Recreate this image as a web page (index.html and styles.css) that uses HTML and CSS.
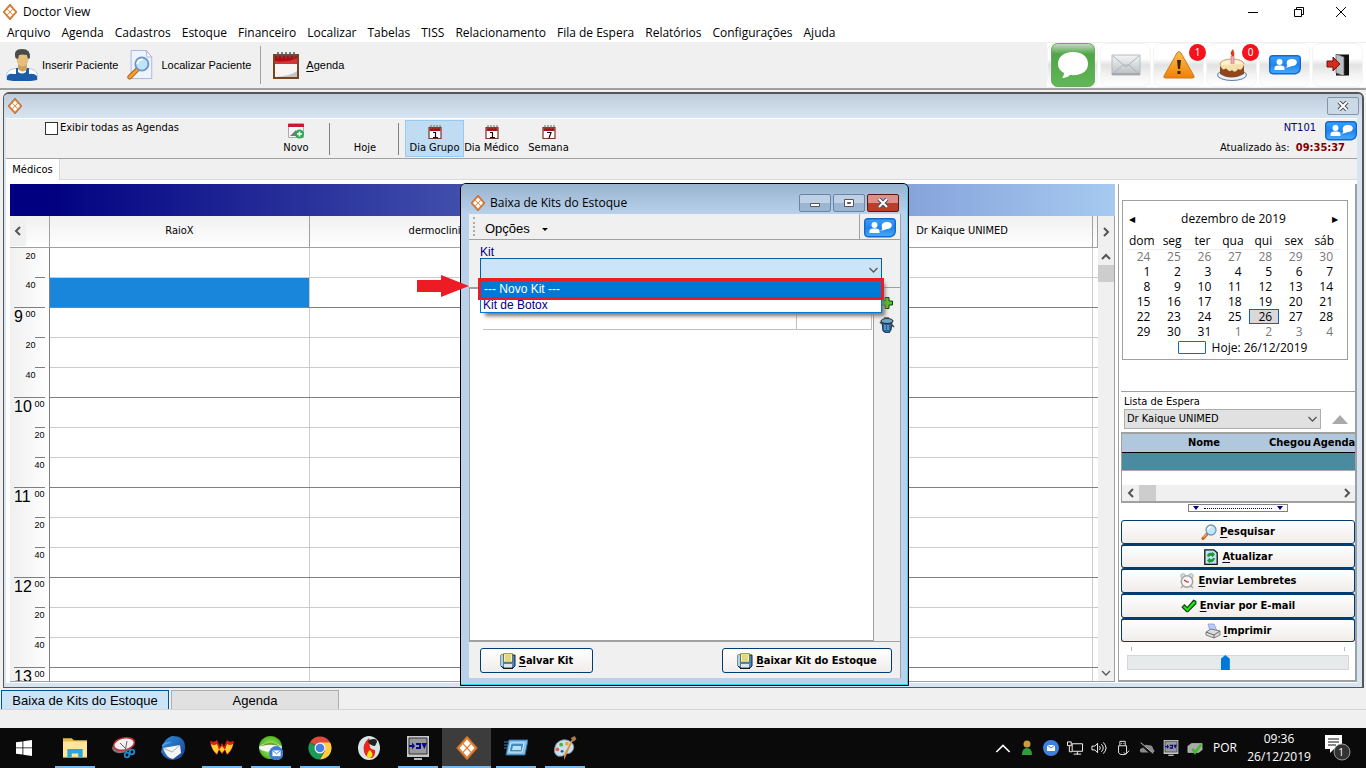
FILE: index.html
```html
<!DOCTYPE html>
<html lang="pt-BR">
<head>
<meta charset="utf-8">
<title>Doctor View</title>
<link rel="stylesheet" href="styles.css">
</head>
<body>
<svg class="sprite" aria-hidden="true">
  <defs>
    <linearGradient id="g-green" x2="0" y2="1"><stop offset="0" stop-color="#c4dfc2"/><stop offset=".25" stop-color="#4fa447"/><stop offset="1" stop-color="#62b757"/></linearGradient>
    <linearGradient id="g-blue" x2="0" y2="1"><stop offset="0" stop-color="#37a3ff"/><stop offset=".5" stop-color="#2084ee"/><stop offset="1" stop-color="#47abff"/></linearGradient>
    <linearGradient id="g-grey" x2="0" y2="1"><stop offset="0" stop-color="#f4f5f6"/><stop offset="1" stop-color="#b9bec2"/></linearGradient>
    <linearGradient id="g-orange" x2="0" y2="1"><stop offset="0" stop-color="#ffc04a"/><stop offset="1" stop-color="#f08008"/></linearGradient>
    <linearGradient id="g-bird" x2="1" y2="1"><stop offset="0" stop-color="#2f8fe0"/><stop offset="1" stop-color="#17408f"/></linearGradient>
    <radialGradient id="g-ball"><stop offset="0" stop-color="#c8f58a"/><stop offset="1" stop-color="#4db51c"/></radialGradient>
    <symbol id="i-logo" viewBox="0 0 14 16"><path d="M7 0 14 8 7 16 0 8Z" fill="#e08030" stroke="#a85a28" stroke-width=".6"/><path d="M7 2.400 9.300 5 7 7.400 4.700 5ZM4.200 5.500 6.400 8 4.200 10.500 2 8ZM9.800 5.500 12 8 9.800 10.500 7.600 8ZM7 8.600 9.300 11 7 13.600 4.700 11Z" fill="#fff"/></symbol>
    <symbol id="i-person" viewBox="0 0 32 32"><path d="M0 30Q0 21 7 20L12 19h8l5 1q7 1 7 10-16 5-32 0" fill="#fff" stroke="#8fb5dd" stroke-width=".7"/><path d="M1 27q2-3 6-2l3 0V19l2 0v4q4 3 8 0v-4l3 0v6q5-1 8 2v4q-15 3-30 0z" fill="#1c5da9"/><path d="M12 14h9v6q-4 5-9 0z" fill="#d2a05d"/><ellipse cx="16.500" cy="9.500" rx="6" ry="8" fill="#e5bd7c"/><path d="M9.500 9Q7 0 16 0t8 9l-2 1-1-4q-5-1-8 0l-1 4z" fill="#4a4a4a"/></symbol>
    <symbol id="i-find" viewBox="0 0 26 32"><path d="M3.500.5h16l6 7v23h-22z" fill="#edf4fd" stroke="#a6b2dc"/><path d="m19.500.5 1 7h5z" fill="#fff" stroke="#a6b2dc"/><path d="m10 21-8 8" stroke="#a65b16" stroke-width="5" stroke-linecap="round"/><path d="m10 21-8 8" stroke="#f5a02b" stroke-width="3" stroke-linecap="round"/><circle cx="15" cy="15" r="7" fill="#bfe3fa" stroke="#6f96c6" stroke-width="2"/><path d="M10 15q1-5 6-5" fill="none" stroke="#fff" stroke-width="2"/></symbol>
    <symbol id="i-mag" viewBox="0 0 16 16"><path d="m6 10-4 4.500" stroke="#b8601c" stroke-width="3" stroke-linecap="round"/><path d="m5.500 10-3 3.500" stroke="#f3a55e" stroke-width="1.500"/><circle cx="10" cy="6" r="5" fill="#bfe8fb" stroke="#7892ba" stroke-width="1.300"/><path d="M7 6q0-3 3-3" fill="none" stroke="#fff" stroke-width="1.500"/></symbol>
    <symbol id="i-cal" viewBox="0 0 26 28"><rect x="1" y="4" width="24" height="23" fill="#f7f6f4" stroke="#764523" stroke-width="2"/><path d="M2 5h22v8H2z" fill="#b60a10"/><path d="M2 10q12 2 22-3v6H2z" fill="#d0373a"/><path d="M2 26q16-1 22-6v6z" fill="#c4c4c4"/><path d="M5 7V1M9 7V1M13 7V1M17 7V1M21 7V1" stroke="#555" stroke-width="1.500"/></symbol>
    <symbol id="i-day1" viewBox="0 0 14 14"><path d="M1 2.500h12v11H1z" fill="#fff" stroke="#713820" stroke-width="1.200"/><path d="M1.500 3h11v3h-11z" fill="#b20e13"/><path d="M3 0v4M6 0v4M9 0v4M12 0v4" stroke="#666"/><path d="M5 7.500h2.500V12M5 12.500h5" stroke="#111" fill="none" stroke-width="1.200"/></symbol>
    <symbol id="i-day7" viewBox="0 0 14 14"><path d="M1 2.500h12v11H1z" fill="#fff" stroke="#713820" stroke-width="1.200"/><path d="M1.500 3h11v3h-11z" fill="#b20e13"/><path d="M3 0v4M6 0v4M9 0v4M12 0v4" stroke="#666"/><path d="M5 7.500h4L7 13" stroke="#111" fill="none" stroke-width="1.200"/></symbol>
    <symbol id="i-new" viewBox="0 0 16 16"><path d="M.5.5h15v14H.5z" fill="#f6f6f6" stroke="#aaa"/><path d="M0 1h16v3H0z" fill="#c91830"/><path d="m2 13 6-6v6z" fill="#777"/><circle cx="11.500" cy="11" r="4.500" fill="#2daa55"/><path d="M9 11h5M11.500 8.500v5" stroke="#fff" stroke-width="1.500"/></symbol>
    <symbol id="i-chat" viewBox="0 0 44 44"><rect x=".5" y=".5" width="43" height="43" rx="6" fill="url(#g-green)" stroke="#69a763"/><path d="M22 9C12 9 7 14 7 21c0 4 2 7 6 9q0 3-2 5 5 0 8-3c12 1 18-4 18-11S32 9 22 9" fill="#fff"/></symbol>
    <symbol id="i-mail" viewBox="0 0 30 22"><path d="M1 1h28v20H1z" fill="url(#g-grey)" stroke="#b6babd"/><path d="m2 20 10-9h6l10 9M2 2l13 11L28 2" fill="none" stroke="#aeb3b7"/><path d="M1 20h28" stroke="#8d9398"/></symbol>
    <symbol id="i-warn" viewBox="0 0 32 28"><path d="M14 2q2-3 4 0l13 23q1 2-2 2H3q-3 0-2-2z" fill="url(#g-orange)" stroke="#c97a20"/><path d="M14 9h4l-1 9h-2zM14.500 20h3v3h-3z" fill="#3b2506"/></symbol>
    <symbol id="i-cake" viewBox="0 0 30 32"><ellipse cx="15" cy="26" rx="14.500" ry="5.500" fill="#e9f1fa" stroke="#5b7eac"/><path d="M3 15v10q11 7 24 0V15z" fill="#8e481c"/><ellipse cx="15" cy="15" rx="12" ry="5" fill="#fbf2d5" stroke="#cf9d55"/><path d="M3 16q3 7 6 3 3 5 6 2 3 4 6-1 4 3 6-5" fill="#f5dfac"/><path d="M14 15V7h3v8" fill="#f1a8b4" stroke="#c76d78" stroke-width=".6"/><path d="M15 7q-3-3 1-7 2 4 1 7z" fill="#df3c16"/></symbol>
    <symbol id="i-users" viewBox="0 0 32 20"><path d="M4 .7h24q3.300 0 3.300 3v9q0 5-5 6H4Q.7 18.700.7 15V4Q.7.7 4 .7" fill="url(#g-blue)" stroke="#1467cc" stroke-width="1.400"/><circle cx="10.500" cy="7" r="3" fill="#fff"/><path d="M5.500 15v-2q0-3 5-2.500 5-.5 5 2.500v2z" fill="#fff"/><path d="M16 12q3 0 2-2c-1-4 1-6 5-6 7 0 6 7 0 7-3 1-5 2-7 1" fill="#fff"/></symbol>
    <symbol id="i-exit" viewBox="0 0 24 22"><path d="M10 .5h13v21H10z" fill="#111"/><path d="m10 0 8 3v19l-8-3z" fill="#bbc0c5" stroke="#555" stroke-width=".7"/><path d="M1 7h6V3l7 7-7 7v-4H1z" fill="#d52b1d" stroke="#6d140e"/></symbol>
    <symbol id="i-refresh" viewBox="0 0 14 16"><path d="M.8.8h9l3.400 3v11.500H.8z" fill="#bfe0f1" stroke="#111" stroke-width="1.300"/><path d="M3 7q1-4 5-3V2.500l3 3-3 3V7Q6 6 5 8zM11 9q-1 5-5 4v1.500l-3-3 3-3V10q2 1 3-1z" fill="#1b9b2d"/></symbol>
    <symbol id="i-clock" viewBox="0 0 14 16"><circle cx="3" cy="3" r="2.300" fill="#ddd" stroke="#999" stroke-width=".7"/><circle cx="11" cy="3" r="2.300" fill="#ddd" stroke="#999" stroke-width=".7"/><path d="m3 13-2 2M11 13l2 2" stroke="#aaa" stroke-width="1.500"/><circle cx="7" cy="8.500" r="5.700" fill="#f6f6f6" stroke="#a3a3a3" stroke-width="1.500"/><path d="m4 7 3 2h2" stroke="#bd2828" fill="none" stroke-width="1.200"/></symbol>
    <symbol id="i-check" viewBox="0 0 14 14"><path d="m1 8 2-2 2.500 2.500L11 2l2 1v2L6 12H5z" fill="#18e80e" stroke="#173f16"/></symbol>
    <symbol id="i-print" viewBox="0 0 16 16"><path d="M3 1h6l3 7H5z" fill="#bbcaff" stroke="#7f8fd3" stroke-width=".7"/><path d="m1 9 5-3 9 2v4l-6 3-8-3z" fill="#ddd" stroke="#666" stroke-width=".8"/><path d="m1 9 8 3 6-4M9 12v3" fill="none" stroke="#666"/></symbol>
    <symbol id="i-save" viewBox="0 0 16 16"><path d="M1 2h14v11l-2 2H3l-2-2z" fill="#3f86d2" stroke="#172434"/><path d="M1 2h2v11H1z" fill="#a9d3f0"/><path d="M3.500.7h9v8.500h-9z" fill="#faf3a4" stroke="#5a5620" stroke-width=".7"/><path d="M5 3h6M5 5h6M5 7h6" stroke="#b5a54b" stroke-width=".7"/><path d="M4 11h8v4H4z" fill="#dfe4e8"/><path d="M3 15.300h10" stroke="#111" stroke-width="1.300"/></symbol>
    <symbol id="i-plus" viewBox="0 0 12 12"><path d="M4 .5h4V4h3.500v4H8v3.500H4V8H.5V4H4z" fill="#55c51b" stroke="#173e12"/></symbol>
    <symbol id="i-trash" viewBox="0 0 16 16"><path d="m3 5 1 9 3 2h3l2-3 1-8z" fill="#28679d" stroke="#17324e"/><ellipse cx="8" cy="4" rx="6" ry="2.500" fill="#6fa5c9" stroke="#222"/><path d="m1 5 2 2M12 7l3 3M5 1h5" stroke="#444" stroke-width="1.500"/><path d="M6 8v5M9 8v5" stroke="#8fbbdb"/></symbol>
    <symbol id="i-win" viewBox="0 0 16 16"><path d="m0 2.300 6.500-.9v6.100H0zM7.300 1.300 16 0v7.500H7.300zM0 8.300h6.500v6.300L0 13.700zM7.300 8.300H16V16l-8.700-1.200z" fill="#fff"/></symbol>
    <symbol id="i-folder" viewBox="0 0 22 18"><path d="M0 0h8l2 2h12v16H0z" fill="#e8bb45"/><path d="M0 3h22v14H0z" fill="#ffe69a"/><path d="M4 10h14v8h-4v-4H8v4H4z" fill="#2aa5df"/></symbol>
    <symbol id="i-snip" viewBox="0 0 24 24"><ellipse cx="10" cy="11" rx="10" ry="6" transform="rotate(-12 10 11)" fill="#777"/><ellipse cx="12" cy="8" rx="10.500" ry="6" transform="rotate(-12 12 8)" fill="#f1f1f1" stroke="#c72f36" stroke-width="1.500"/><path d="m8 7 8 8M15 5l-2 11" stroke="#666"/><circle cx="15" cy="19" r="2.300" fill="none" stroke="#2287cf" stroke-width="1.800"/><circle cx="20" cy="16" r="2.300" fill="none" stroke="#2287cf" stroke-width="1.800"/></symbol>
    <symbol id="i-bird" viewBox="0 0 24 24"><path d="M11 0q14 0 13 13-1 10-12 11Q4 24 0 16l2-8q3-6 9-8" fill="url(#g-bird)"/><path d="m2 12 17-3 1 8-8 6Q5 22 2 12" fill="#f5f5f5"/><path d="m2 12 9 4 8-7" fill="none" stroke="#ababab"/><path d="M1 9q5-5 10-2-6 0-10 4" fill="#4aa7e9"/></symbol>
    <symbol id="i-bat" viewBox="0 0 24 16"><path d="M0 1q5 2 7-1l3 7 2-4 2 4 3-7q2 3 7 1-1 9-7 14l-2-5-3 4-3-4-2 5Q1 10 0 1" fill="#d92414"/><path d="M1 4q3 2 6 0l2 6 3-4 3 4 2-6q3 2 6 0-1 6-6 10l-2-5-3 4-3-4-2 5Q2 10 1 4" fill="#ffd12e"/></symbol>
    <symbol id="i-ball" viewBox="0 0 25 25"><circle cx="12" cy="12" r="12" fill="url(#g-ball)"/><ellipse cx="12" cy="12" rx="12" ry="4.500" fill="#f7f7f0"/><path d="M1 11q11-8 22 0Q12 7 1 11" fill="#67a43b"/><circle cx="18" cy="18" r="7.500" fill="#3c7dd3"/><path d="M14 15h8.500v6H14z" fill="#fff"/><path d="m14 15 4.300 3.500 4.200-3.500" fill="none" stroke="#3c7dd3"/></symbol>
    <symbol id="i-chrome" viewBox="0 0 24 24"><path d="M12 12 2 6.200a11.500 11.500 0 0 1 20 0V8z" fill="#dd4b3e"/><path d="M12 12h-1L2 6.200A11.500 11.500 0 0 0 12 23.500l4-8z" fill="#199b56"/><path d="M12 6.500h10.200A11.500 11.500 0 0 1 12 23.500l5-9z" fill="#ffcd42"/><circle cx="12" cy="12" r="5.500" fill="#f2f2f2"/><circle cx="12" cy="12" r="4.300" fill="#477fe4"/></symbol>
    <symbol id="i-fire" viewBox="0 0 24 24"><ellipse cx="12" cy="12" rx="11" ry="12" fill="#d9e6e8"/><path d="M12 2q-7 6-5 14 2 6 8 6 4-3 3-8-7-1-5-8z" fill="#e9261b"/><path d="M10 19q0-3 3-5 5 5 0 8-3 0-3-3" fill="#ffe015"/><path d="M12 4q8-3 8 2l-2 4q-4 0-7-4z" fill="#222"/></symbol>
    <symbol id="i-dv" viewBox="0 0 22 24"><path d="M0 0h22v21H0z" fill="#c8c8c8"/><path d="M2 2h18v16H2z" fill="#999" stroke="#333"/><path d="M2 9h3V6.500L8 10l-3 3.500V11H2zM9 7h5v6H9v-2h3V9H9zM14.500 7H20l-2.700 6z" fill="#080891"/><path d="M7 22h8v2H7z" fill="#bbb"/></symbol>
    <symbol id="i-run" viewBox="0 0 24 18"><path d="m5 1 19 0-3 15H2z" fill="#80c2ed" stroke="#2d6b9a"/><path d="m7 4 13 0-2 9H5z" fill="#468bbd" stroke="#d5effb"/><path d="M9 7h8v4H8z" fill="#b8e1f5"/><path d="M0 3h5M0 6h4M0 9h4" stroke="#387aab"/></symbol>
    <symbol id="i-paint" viewBox="0 0 24 25"><path d="M3 8Q10 1 18 6q5 4 2 9-2 4-7 3-3 4-8 3-7-3-2-13" fill="#c9e1ec" stroke="#7799aa"/><circle cx="8" cy="9" r="2" fill="#4fae36"/><circle cx="14" cy="8" r="2" fill="#f2a52b"/><circle cx="4" cy="14" r="2" fill="#e7654f"/><circle cx="9" cy="16" r="1.500" fill="#245d7e"/><path d="m21 3-9 20-1 2v-6l9-17z" fill="#dd9142"/><path d="m18 2 4-2 2 3-3 3z" fill="#ae7948"/></symbol>
    <symbol id="i-up" viewBox="0 0 12 8"><path d="m1 7 5-5 5 5" fill="none" stroke="#fff" stroke-width="1.200"/></symbol>
    <symbol id="i-user" viewBox="0 0 12 16"><circle cx="6" cy="4" r="3.500" fill="#ce9a3a"/><path d="M1 15q0-7 5-7t5 7z" fill="#2f9d3d"/></symbol>
    <symbol id="i-blue" viewBox="0 0 16 16"><circle cx="8" cy="8" r="8" fill="#3f80df"/><path d="M4 5h8v6H4z" fill="#fff"/><path d="m4 5 4 3 4-3" stroke="#3f80df" fill="none"/></symbol>
    <symbol id="i-net" viewBox="0 0 17 16"><path d="M5.500 3.500h11v8h-11zM11 12v3M7 14.500h8M.5 1.500h4v4h-4zM2.500 6v6h3" fill="none" stroke="#fff"/></symbol>
    <symbol id="i-sound" viewBox="0 0 17 16"><path d="M1 6h3l3-3v10l-3-3H1zM9 6q2 2 0 4M11 4q4 4 0 8M13 2q6 6 0 12" fill="none" stroke="#fff"/></symbol>
    <symbol id="i-usb" viewBox="0 0 14 18"><path d="M3.500 6V1.500h6V6M2 6.500h9v8q0 2-4 2t-5-2zM5 4h1M7.500 4h1" fill="none" stroke="#fff"/><path d="m8 14 2 2 4-4" fill="none" stroke="#fff"/></symbol>
    <symbol id="i-cloud" viewBox="0 0 18 14"><path d="M2 12q-3-4 2-5 2-5 7-3 4-1 5 4 3 3 0 4z" fill="#8a8a8a"/><path d="m1 1 14 13" stroke="#111" stroke-width="3"/><path d="m2 1 14 12" stroke="#ddd"/></symbol>
    <symbol id="i-drive" viewBox="0 0 18 16"><path d="m1 6 4-3h12v7l-4 3H1z" fill="#aaa" stroke="#ddd" stroke-width=".6"/><path d="m6 9 3 4 7-9" fill="none" stroke="#43bb35" stroke-width="3"/></symbol>
    <symbol id="i-note" viewBox="0 0 26 26"><path d="M0 0h17v14H9l-4 4v-4H0z" fill="#fff"/><path d="M3 4h11M3 7h11M3 10h8" stroke="#111"/><circle cx="17" cy="17" r="8" fill="#333" stroke="#999"/></symbol>
    <symbol id="i-left" viewBox="0 0 8 10"><path d="M6 1 2 5l4 4" fill="none" stroke="#555" stroke-width="2"/></symbol>
    <symbol id="i-right" viewBox="0 0 8 10"><path d="m2 1 4 4-4 4" fill="none" stroke="#555" stroke-width="2"/></symbol>
    <symbol id="i-cup" viewBox="0 0 10 8"><path d="m1 6 4-4 4 4" fill="none" stroke="#555" stroke-width="2"/></symbol>
    <symbol id="i-cdown" viewBox="0 0 10 8"><path d="m1 2 4 4 4-4" fill="none" stroke="#555" stroke-width="1.300"/></symbol>
    <symbol id="i-x" viewBox="0 0 12 10"><path d="m2 1 8 8M10 1 2 9" stroke="#47505d" stroke-width="4"/><path d="m2 1 8 8M10 1 2 9" stroke="#fff" stroke-width="2"/></symbol>
  </defs>
</svg>

<header class="titlebar">
  <svg class="logo"><use href="#i-logo"/></svg><span class="grow">Doctor View</span>
  <button class="wbtn" aria-label="Minimizar"><svg viewBox="0 0 12 12"><path d="M1 6.500h10" stroke="#000"/></svg></button>
  <button class="wbtn" aria-label="Restaurar"><svg viewBox="0 0 12 12"><path d="M1.500 3.500h7v7h-7zM3.500 3V1.500h7v7H9" fill="none" stroke="#000"/></svg></button>
  <button class="wbtn" aria-label="Fechar"><svg viewBox="0 0 12 12"><path d="m1 1 10 10M11 1 1 11" stroke="#000"/></svg></button>
</header>

<nav class="menubar">
  <button>Arquivo</button><button>Agenda</button><button>Cadastros</button><button>Estoque</button><button>Financeiro</button><button>Localizar</button><button>Tabelas</button><button>TISS</button><button>Relacionamento</button><button>Fila de Espera</button><button>Relatórios</button><button>Configurações</button><button>Ajuda</button>
</nav>

<div class="toolbar">
  <button class="tool t-person"><svg><use href="#i-person"/></svg>Inserir Paciente</button>
  <button class="tool t-find"><svg><use href="#i-find"/></svg>Localizar Paciente</button>
  <span class="sep"></span>
  <button class="tool t-cal"><svg><use href="#i-cal"/></svg><span><u>A</u>genda</span></button>
  <div class="actions">
    <button class="act" aria-label="Mensagens"><svg class="s44"><use href="#i-chat"/></svg></button>
    <button class="act" aria-label="E-mail"><svg class="s30"><use href="#i-mail"/></svg></button>
    <button class="act" aria-label="Alertas"><svg class="s32"><use href="#i-warn"/></svg><span class="badge">1</span></button>
    <button class="act" aria-label="Aniversários"><svg class="s32"><use href="#i-cake"/></svg><span class="badge">0</span></button>
    <button class="act" aria-label="Usuários"><svg class="s32 short"><use href="#i-users"/></svg></button>
    <button class="act" aria-label="Sair"><svg class="s24"><use href="#i-exit"/></svg></button>
  </div>
</div>

<main class="workspace">
  <section class="agenda">
    <div class="agenda-title"><svg class="logo"><use href="#i-logo"/></svg><span class="grow"></span><button class="close-soft" aria-label="Fechar agenda"><svg><use href="#i-x"/></svg></button></div>
    <div class="agenda-tools">
      <label class="show-all"><input type="checkbox">Exibir todas as Agendas</label>
      <button class="view"><svg class="s16"><use href="#i-new"/></svg>Novo</button>
      <span class="vsep"></span>
      <button class="view">Hoje</button>
      <span class="vsep"></span>
      <div class="views">
        <button class="view on"><svg><use href="#i-day1"/></svg>Dia Grupo</button>
        <button class="view"><svg><use href="#i-day1"/></svg>Dia Médico</button>
        <button class="view"><svg><use href="#i-day7"/></svg>Semana</button>
      </div>
      <div class="status">
        <div class="user"><span>NT101</span><svg><use href="#i-users"/></svg></div>
        <p>Atualizado às: <b>09:35:37</b></p>
      </div>
    </div>
    <div class="tabs"><button>Médicos</button></div>
    <div class="agenda-body">
      <div class="schedule">
        <div class="banner"></div>
        <div class="grid-wrap">
          <div class="grid-scroll">
            <table class="grid">
              <colgroup><col class="c-time"><col><col><col><col><col class="c-end"></colgroup>
              <thead><tr><th><button class="prev" aria-label="Anterior"><svg><use href="#i-left"/></svg></button></th><th>RaioX</th><th>dermoclinica</th><th></th><th>Dr Kaique UNIMED</th><th></th></tr></thead>
              <tbody>
                <tr class="early first"><th><small>20</small></th><td></td><td></td><td></td><td></td><td></td></tr>
                <tr class="early last"><th><small>40</small></th><td class="sel"></td><td></td><td></td><td></td><td></td></tr>
                <tr class="early hour"><th><b>9</b><small>00</small></th><td></td><td></td><td></td><td></td><td></td></tr>
                <tr class="early"><th><small>20</small></th><td></td><td></td><td></td><td></td><td></td></tr>
                <tr class="early last"><th><small>40</small></th><td></td><td></td><td></td><td></td><td></td></tr>
                <tr class="hour"><th><b>10</b><small>00</small></th><td></td><td></td><td></td><td></td><td></td></tr>
                <tr><th><small>20</small></th><td></td><td></td><td></td><td></td><td></td></tr>
                <tr class="last"><th><small>40</small></th><td></td><td></td><td></td><td></td><td></td></tr>
                <tr class="hour"><th><b>11</b><small>00</small></th><td></td><td></td><td></td><td></td><td></td></tr>
                <tr><th><small>20</small></th><td></td><td></td><td></td><td></td><td></td></tr>
                <tr class="last"><th><small>40</small></th><td></td><td></td><td></td><td></td><td></td></tr>
                <tr class="hour"><th><b>12</b><small>00</small></th><td></td><td></td><td></td><td></td><td></td></tr>
                <tr><th><small>20</small></th><td></td><td></td><td></td><td></td><td></td></tr>
                <tr class="last"><th><small>40</small></th><td></td><td></td><td></td><td></td><td></td></tr>
                <tr class="hour"><th><b>13</b><small>00</small></th><td></td><td></td><td></td><td></td><td></td></tr>
              </tbody>
            </table>
          </div>
          <div class="vscroll"><button class="next" aria-label="Próximo"><svg><use href="#i-right"/></svg></button><button aria-label="Subir"><svg><use href="#i-cup"/></svg></button><span class="thumb"></span><span class="grow"></span><button aria-label="Descer"><svg><use href="#i-cdown"/></svg></button></div>
        </div>
      </div>
      <aside class="side">
        <div class="calendar">
          <div class="month"><button aria-label="Mês anterior">◀</button><span>dezembro de 2019</span><button aria-label="Próximo mês">▶</button></div>
          <table>
            <thead><tr><th>dom</th><th>seg</th><th>ter</th><th>qua</th><th>qui</th><th>sex</th><th>sáb</th></tr></thead>
            <tbody>
              <tr class="out"><td>24</td><td>25</td><td>26</td><td>27</td><td>28</td><td>29</td><td>30</td></tr>
              <tr><td>1</td><td>2</td><td>3</td><td>4</td><td>5</td><td>6</td><td>7</td></tr>
              <tr><td>8</td><td>9</td><td>10</td><td>11</td><td>12</td><td>13</td><td>14</td></tr>
              <tr><td>15</td><td>16</td><td>17</td><td>18</td><td>19</td><td>20</td><td>21</td></tr>
              <tr><td>22</td><td>23</td><td>24</td><td>25</td><td class="today">26</td><td>27</td><td>28</td></tr>
              <tr><td>29</td><td>30</td><td>31</td><td class="out">1</td><td class="out">2</td><td class="out">3</td><td class="out">4</td></tr>
            </tbody>
          </table>
          <p class="hoje"><i></i>Hoje: 26/12/2019</p>
        </div>
        <div class="wait">
          <label for="espera">Lista de Espera</label>
          <div class="wait-row"><span class="pick"><select id="espera"><option>Dr Kaique UNIMED</option></select><svg><use href="#i-cdown"/></svg></span><span class="tri"></span></div>
          <div class="wait-list">
            <table><thead><tr><th>Nome</th><th>Chegou</th><th>Agenda</th></tr></thead><tbody><tr><td></td><td></td><td></td></tr></tbody></table>
            <div class="hscroll"><button aria-label="Esquerda"><svg><use href="#i-left"/></svg></button><span class="hthumb"></span><span class="grow"></span><button aria-label="Direita"><svg><use href="#i-right"/></svg></button></div>
          </div>
        </div>
        <div class="splitter"><i></i><span></span><i></i></div>
        <div class="cmds">
          <button><svg><use href="#i-mag"/></svg><span><u>P</u>esquisar</span></button>
          <button><svg><use href="#i-refresh"/></svg><span><u>A</u>tualizar</span></button>
          <button><svg><use href="#i-clock"/></svg><span><u>E</u>nviar Lembretes</span></button>
          <button><svg><use href="#i-check"/></svg><span><u>E</u>nviar por E-mail</span></button>
          <button><svg><use href="#i-print"/></svg><span><u>I</u>mprimir</span></button>
        </div>
        <div class="ticks"><i></i><i></i></div>
        <input class="zoom" type="range" min="0" max="100" value="44" aria-label="Zoom">
      </aside>
    </div>
  </section>

  <section class="dialog" role="dialog" aria-labelledby="dlg">
    <div class="dialog-title"><svg class="logo"><use href="#i-logo"/></svg><span class="grow" id="dlg">Baixa de Kits do Estoque</span>
      <button class="dwin" aria-label="Minimizar"><svg viewBox="0 0 12 10"><path d="M1.500 5.500h9v3h-9z" fill="#fff" stroke="#555"/></svg></button>
      <button class="dwin" aria-label="Maximizar"><svg viewBox="0 0 12 10"><path d="M1.500 1.500h9v7h-9z" fill="#fff" stroke="#555"/><path d="M4.500 4.500h3v1h-3z" fill="#9bb" stroke="#555"/></svg></button>
      <button class="dwin red" aria-label="Fechar"><svg><use href="#i-x"/></svg></button>
    </div>
    <div class="dialog-main">
      <div class="options"><i class="grip"></i><button>Opções</button><i class="caret"></i><span class="users"><svg><use href="#i-users"/></svg></span></div>
      <div class="kit">
        <label for="kit">Kit</label>
        <div class="combo">
          <select id="kit"><option></option><option>--- Novo Kit ---</option><option>Kit de Botox</option></select>
          <svg class="chev"><use href="#i-cdown"/></svg>
          <ul class="popup" role="listbox" aria-label="Kit"><li class="hot" role="option" aria-selected="true">--- Novo Kit ---</li><li role="option">Kit de Botox</li></ul>
          <svg class="arrow" viewBox="0 0 52 22"><path d="M0 5h24V0l28 11-28 11v-5H0z" fill="#ed1c24"/></svg>
        </div>
      </div>
      <div class="items">
        <div class="sheet"><div class="line"><span></span><span></span></div></div>
        <div class="rail"><button aria-label="Adicionar"><svg class="s12"><use href="#i-plus"/></svg></button><button aria-label="Remover"><svg><use href="#i-trash"/></svg></button></div>
      </div>
      <div class="foot">
        <button class="f-save"><svg><use href="#i-save"/></svg><span><u>S</u>alvar Kit</span></button>
        <button class="f-take"><svg><use href="#i-save"/></svg><span><u>B</u>aixar Kit do Estoque</span></button>
      </div>
    </div>
  </section>
</main>

<div class="wintabs"><button class="cur">Baixa de Kits do Estoque</button><button>Agenda</button></div>
<div class="statusbar"></div>

<footer class="taskbar">
  <button class="start" aria-label="Iniciar"><svg><use href="#i-win"/></svg></button>
  <button class="app open" aria-label="Arquivos"><svg><use href="#i-folder"/></svg></button>
  <button class="app" aria-label="Captura"><svg><use href="#i-snip"/></svg></button>
  <button class="app" aria-label="Correio"><svg><use href="#i-bird"/></svg></button>
  <button class="app open" aria-label="Editor"><svg><use href="#i-bat"/></svg></button>
  <button class="app open" aria-label="Chat"><svg><use href="#i-ball"/></svg></button>
  <button class="app open" aria-label="Chrome"><svg><use href="#i-chrome"/></svg></button>
  <button class="app" aria-label="Firebird"><svg><use href="#i-fire"/></svg></button>
  <button class="app open" aria-label="DV"><svg><use href="#i-dv"/></svg></button>
  <button class="app open active" aria-label="Doctor View"><svg><use href="#i-logo"/></svg></button>
  <button class="app open" aria-label="Executar"><svg><use href="#i-run"/></svg></button>
  <button class="app open" aria-label="Paint"><svg><use href="#i-paint"/></svg></button>
  <span class="grow"></span>
  <div class="tray">
    <svg><use href="#i-up"/></svg><svg><use href="#i-user"/></svg><svg><use href="#i-blue"/></svg><svg><use href="#i-net"/></svg><svg><use href="#i-sound"/></svg><svg><use href="#i-usb"/></svg><svg><use href="#i-cloud"/></svg><svg><use href="#i-dv"/></svg><svg><use href="#i-drive"/></svg>
  </div>
  <span class="lang">POR</span>
  <div class="clock"><span>09:36</span><span>26/12/2019</span></div>
  <button class="notes" aria-label="Notificações"><svg><use href="#i-note"/></svg><span>1</span></button>
</footer>
</body>
</html>
```
FILE: styles.css
```css
* { box-sizing: border-box; }
body { margin: 0; height: 100vh; display: flex; flex-direction: column; background: #f0f0f0; color: #000; font: 11px/14px "DejaVu Sans Condensed", "Noto Sans", sans-serif; overflow: hidden; }
body > * { flex: none; }
button { margin: 0; padding: 0; border: 0; background: none; font: inherit; color: inherit; display: flex; align-items: center; justify-content: center; white-space: nowrap; }
p { margin: 0; }
svg { display: block; flex: none; }
table { border-collapse: collapse; table-layout: fixed; width: 100%; }
th, td { padding: 0; font-weight: normal; }
u { text-underline-offset: 2px; }
.sprite { position: absolute; width: 0; height: 0; }
.grow { flex: 1; }
.logo { width: 14px; height: 16px; }

.titlebar { display: flex; align-items: center; height: 24px; padding: 0 7px 0 3px; background: #fff; font: 12px/16px "Open Sans", sans-serif; }
.titlebar .grow { padding-left: 6px; }
.wbtn { width: 46px; height: 22px; }
.titlebar .wbtn:last-child { width: 37px; }
.wbtn svg { width: 12px; height: 12px; }
.menubar { display: flex; align-items: center; height: 18px; padding-left: 7px; gap: 11px; background: #fff; font: 12px/16px "Open Sans", sans-serif; }

.toolbar { display: flex; align-items: center; height: 48px; padding: 0 0 2px 6px; border-top: 2px solid #f0f0f0; border-bottom: 2px solid #a0a0a0; background: #f0f0f0; font: 11px/14px "Liberation Sans", sans-serif; }
.tool { gap: 4px; }
.t-person svg { width: 32px; height: 32px; }
.t-find { margin-left: 9px; gap: 8px; }
.t-find svg { width: 26px; height: 30px; }
.sep { width: 1px; height: 38px; margin: 0 12px 0 9px; background: #a0a0a0; }
.t-cal { gap: 7px; }
.t-cal svg { width: 26px; height: 28px; }
.actions { display: flex; margin-left: auto; gap: 2px; padding-right: 3px; background: #fff; }
.act { position: relative; width: 51px; height: 44px; border: 1px solid #f4f4f4; border-radius: 8px; background: linear-gradient(#fff 35%, #e2e2e2 50%, #f4f4f4 75%, #fff); }
.s44 { width: 44px; height: 44px; }
.s32 { width: 32px; height: 32px; }
.s32.short { height: 20px; }
.s30 { width: 30px; height: 22px; }
.s24 { width: 24px; height: 22px; }
.s16 { width: 16px; height: 16px; }
.badge { position: absolute; top: 0; right: -3px; width: 17px; height: 17px; border-radius: 50%; background: #f5121d; color: #fff; font: 10px/17px "Noto Sans", sans-serif; text-align: center; }

.workspace { position: relative; flex: 1; display: flex; min-height: 0; padding: 2px 2px 0 3px; }
.agenda { flex: 1; display: flex; flex-direction: column; min-width: 0; min-height: 0; border: solid #555; border-radius: 6px 6px 0 0; border-width: 2px 2px 1px 1px; background: #d7e4f2; padding: 0 5px 4px 2px; }
.agenda-title { display: flex; align-items: center; height: 24px; margin: 0 -5px 0 -2px; padding: 0 3px 0 4px; border-radius: 4px 4px 0 0; background: linear-gradient(#bfcddb, #d7e4f2); }
.close-soft { width: 32px; height: 18px; border: 1px solid #8495a8; border-radius: 2px; background: #cbd8e6; }
.close-soft svg { width: 12px; height: 10px; }
.agenda-tools { display: flex; height: 41px; border-top: 1px solid #fff; border-bottom: 1px solid #a0a0a0; background: #f0f0f0; padding-top: 2px; }
.show-all { display: flex; gap: 2px; width: 257px; padding-left: 39px; height: 14px; align-items: center; }
.show-all input { appearance: none; width: 13px; height: 13px; margin: 0; border: 1px solid #333; background: #fff; }
.view { flex-direction: column; justify-content: flex-end; width: 57px; height: 35px; padding-bottom: 1px; gap: 2px; }
.view svg { width: 14px; height: 14px; }
.view .s16 { width: 16px; height: 16px; }
.vsep { width: 1px; height: 32px; margin-top: 2px; background: #808080; }
.agenda-tools > .view { width: 66px; }
.vsep + .view { margin-left: 2px; }
.views { display: flex; margin-left: 7px; }
.view.on { outline: 1px solid #99c9ef; background: #bfdcf2; }
.status { display: flex; flex-direction: column; margin-left: auto; }
.user { display: flex; justify-content: flex-end; gap: 9px; color: #000080; height: 20px; }
.user svg { width: 32px; height: 20px; }
.status p { padding-right: 12px; }
.status b { margin-left: 3px; color: #800000; }
.tabs { height: 21px; background: #f0f0f0; border-bottom: 1px solid #d9d9d9; display: flex; }
.tabs button { width: 54px; height: 21px; border-right: 1px solid #d9d9d9; background: #fff; }
.agenda-body { flex: 1; display: flex; min-height: 0; padding: 4px 0 1px 4px; background: #fff; }
.schedule { flex: 1; display: flex; flex-direction: column; min-width: 0; border-bottom: 1px solid #a0a0a0; }
.banner { height: 32px; background: linear-gradient(90deg, #000080 3%, #a6caf0); }
.grid-wrap { flex: 1; display: flex; min-height: 0; }
.grid-scroll { flex: 1; overflow: hidden; min-width: 0; }
.c-time { width: 39px; }
.c-end { width: 5px; }
.grid thead th { height: 31px; padding: 0; border: solid #a0a0a0; border-width: 0 1px 1px 0; background: linear-gradient(#f0f0f0, #fff); }
.prev { width: 16px; height: 30px; background: #f0f0f0; }
.prev svg, .next svg, .hscroll svg { width: 8px; height: 10px; }
.grid td { height: 30px; border: 1px solid #ccc; border-top: 0; }
.grid .last td { border-bottom-color: #808080; }
.grid td:last-child { border-right: 0; }
.grid td.sel { background: #1a86db; }
.grid tbody th { height: 30px; border-right: 1px solid #808080; background: linear-gradient(90deg, #f0f0f0, #fff); text-align: right; vertical-align: top; padding: 0 4px; }
.grid tbody th small { display: inline-block; width: 10px; border-top: 1px solid #808080; font: 9px/14px "Liberation Sans", sans-serif; vertical-align: top; }
.grid .early:not(.hour) th small { width: 19px; padding-right: 9px; text-align: left; border-image: linear-gradient(90deg, transparent 50%, #808080 50%) 1; }
.grid .early.first th small { border-color: transparent; border-image: none; }
.grid .hour th small { border: 0; }
.grid .hour th { background: linear-gradient(#808080, #808080) 4px 0 / 31px 1px no-repeat, linear-gradient(90deg, #f0f0f0, #fff); }
.grid .hour.early small { width: 19px; text-align: left; }
.grid .hour b { float: left; font: 16px/20px "Liberation Sans", sans-serif; }
.vscroll { display: flex; flex-direction: column; width: 17px; border-right: 1px solid #a0a0a0; background: #f0f0f0; }
.vscroll button { height: 17px; }
.vscroll .next { height: 32px; }
.vscroll svg { width: 10px; height: 8px; }
.vscroll .next svg { width: 8px; height: 10px; }
.thumb { height: 17px; background: #cdcdcd; }

.side { display: flex; flex-direction: column; width: 239px; margin-left: 3px; padding: 0 0 0 2px; border: solid #a0a0a0; border-width: 0 2px 2px 1px; background: #fff; }
.calendar { height: 160px; margin: 16px 7px 0 1px; padding: 8px 7px 0 4px; border: 1px solid #a0a0a0; font: 12px/15px "Open Sans", sans-serif; }
.month { display: flex; justify-content: space-between; align-items: center; height: 18px; padding: 0 2px; }
.month button { font-size: 8px; }
.calendar table { margin-top: 7px; }
.calendar th { height: 15px; border-bottom: 1px solid #eee; font: 12px/14px "Open Sans", sans-serif; padding-right: 1px; }
.calendar td { height: 15px; padding: 0 7px 0 0; text-align: right; line-height: 14px; }
.calendar .out, .calendar .out td { color: #777; }
.calendar .today { outline: 1px solid #0067c8; outline-offset: -1px; background: #d9d9d9; }
.hoje { display: flex; align-items: center; justify-content: center; gap: 6px; margin-top: 1px; padding-left: 18px; }
.hoje i { width: 28px; height: 13px; border: 1px solid #1068cc; border-radius: 1px; }
.wait { margin-top: 31px; padding: 3px 0 0; border-top: 1px solid #a0a0a0; }
.wait > label { padding-left: 3px; }
.wait-row { display: flex; align-items: center; padding-left: 3px; gap: 11px; height: 20px; }
.pick { position: relative; width: 197px; }
.pick select { appearance: none; display: block; width: 100%; height: 20px; padding: 0 2px; border: 1px solid #adadad; border-radius: 0; background: #e1e1e1; color: #000; font: inherit; }
.pick svg { position: absolute; right: 3px; top: 6px; width: 11px; height: 8px; }
.tri { width: 0; border: solid transparent; border-width: 0 8px 9px; border-bottom-color: #aaa; }
.wait-list { margin-top: 3px; border: solid #a0a0a0; border-width: 2px 0 2px 1px; height: 71px; display: flex; flex-direction: column; justify-content: space-between; }
.wait-list th { height: 18px; background: #b0c8de; border-bottom: 1px solid #000; font-weight: bold; text-align: right; overflow: hidden; white-space: nowrap; }
.wait-list th:first-child { width: 98px; }
.wait-list th:nth-child(2) { width: 91px; }
.wait-list th:last-child { text-align: left; padding-left: 2px; }
.wait-list td { height: 18px; background: #4b8ba0; border-bottom: 1px solid #b0a8a8; }
.hscroll { display: flex; height: 16px; background: #f0f0f0; }
.hscroll button { width: 17px; }
.hthumb { width: 17px; background: #cdcdcd; }
.splitter { display: flex; align-items: center; justify-content: center; gap: 5px; width: 100px; height: 8px; margin: 1px auto 0; border: 1px solid #808080; }
.splitter span { width: 68px; border-top: 1px dotted #000080; }
.splitter i { border: solid transparent; border-width: 4px 3px 0; border-top-color: #000080; }
.cmds { display: flex; flex-direction: column; margin-top: 8px; }
.cmds button, .foot button { border: 1px solid #003c74; border-radius: 3px; background: linear-gradient(#fff, #f0ece9); font-weight: bold; gap: 3px; }
.cmds button { height: 24px; }
.cmds button:nth-child(n+2) { border-top-width: 2px; }
.cmds button:nth-child(3), .cmds button:nth-child(4) { height: 25px; }
.cmds svg, .foot svg { width: 16px; height: 16px; }
.ticks { display: flex; justify-content: space-between; height: 4px; margin: 5px 10px 0; }
.ticks i { width: 1px; background: #bbb; }
.zoom { appearance: none; width: auto; height: 15px; margin: 4px 6px 0; border: 1px solid #d6d6d6; background: #e7eaea; }
.zoom::-webkit-slider-thumb { appearance: none; width: 9px; height: 15px; background: #0078d7; clip-path: polygon(50% 0, 100% 25%, 100% 100%, 0 100%, 0 25%); }

.dialog { position: absolute; left: 460px; top: 93px; width: 449px; height: 503px; display: flex; flex-direction: column; padding: 0 7px 7px 8px; border: 1px solid #000; border-radius: 6px 6px 0 0; box-shadow: inset -1px -1px #2fd3ea; background: #b9d1ea; }
.dialog-title { display: flex; align-items: center; height: 30px; gap: 2px; margin: 0 -6px 0 -8px; padding: 7px 8px 0 10px; border-radius: 5px 5px 0 0; background: linear-gradient(#99b4d1, #b9d1ea); font: 12px/16px "Open Sans", sans-serif; }
.dialog-title .grow { padding-left: 3px; }
.dwin { width: 32px; height: 18px; border: 1px solid #6b84a3; border-radius: 2px; background: linear-gradient(#bdd0e6 50%, #9bb5d2 50%); }
.dwin svg { width: 12px; height: 10px; }
.dwin.red { border-color: #5d1710; background: linear-gradient(#dc9086 50%, #bd3d2b 50%); }
.dialog-main { flex: 1; display: flex; flex-direction: column; min-height: 0; background: #f0f0f0; border-right: 1px solid #a0a0a0; }
.options { display: flex; align-items: center; height: 26px; padding: 0 1px 0 4px; border-bottom: 1px solid #a0a0a0; font: 13px/16px "Liberation Sans", sans-serif; }
.options button { padding-top: 5px; }
.grip { height: 19px; border-left: 2px dotted #aaa; margin-right: 10px; }
.caret { margin: 5px 0 0 12px; border: solid transparent; border-width: 3px 3px 0; border-top-color: #000; }
.users { display: flex; align-items: center; height: 25px; margin-left: auto; padding: 2px 3px 0 4px; border-left: 1px solid #a0a0a0; }
.users svg { width: 32px; height: 20px; }
.kit { height: 48px; padding: 5px 18px 0 11px; border-bottom: 1px solid #a0a0a0; font: 12px/14px "Liberation Sans", sans-serif; color: #000080; }
.kit label { display: block; height: 13px; }
.combo { position: relative; }
.combo select { appearance: none; display: block; width: 100%; height: 22px; border: 1px solid #0a5ca8; border-radius: 0; background: #cce4f7; }
.chev { position: absolute; right: 3px; top: 8px; width: 11px; height: 8px; }
.popup { position: absolute; z-index: 2; left: 0; right: 0; top: 20px; margin: 0; padding: 0; list-style: none; border: 1px solid #0078d7; border-top: 0; background: #fff; box-shadow: 4px 4px 4px -1px #777; }
.popup li { height: 12px; line-height: 10px; padding: 0 2px; }
.popup .hot { height: 22px; margin: 0 -3px; padding: 0 3px; border: 3px solid #ed1c24; background: #0078d7; color: #fff; line-height: 17px; }
.arrow { position: absolute; z-index: 3; left: -63px; top: 17px; width: 52px; height: 22px; }
.items { flex: 1; display: flex; min-height: 0; border-bottom: 1px solid #a0a0a0; }
.sheet { flex: 1; border: 1px solid #a0a0a0; background: #fff; padding: 15px 1px 0 13px; }
.line { display: flex; height: 26px; border: solid #c0c0c0; border-width: 0 1px 1px 0; }
.line span { flex: 1; }
.line span + span { flex: 0 0 75px; border-left: 1px solid #c0c0c0; }
.rail { width: 26px; padding-top: 9px; display: flex; flex-direction: column; gap: 8px; align-items: center; }
.rail svg { width: 16px; height: 16px; }
.rail .s12 { width: 12px; height: 12px; }
.foot { display: flex; justify-content: space-between; padding: 6px 8px 5px 11px; }
.foot button { height: 25px; }
.f-save { width: 113px; }
.f-take { width: 170px; }

.wintabs { display: flex; gap: 2px; height: 22px; padding: 2px 1px 0; border-bottom: 1px solid #d4d4d4; overflow: hidden; font: 13px/20px "Liberation Sans", sans-serif; }
.wintabs button { width: 168px; height: 21px; border: 1px solid #adadad; background: #e1e1e1; }
.wintabs .cur { border-color: #005499; background: #cce4f7; }
.statusbar { height: 18px; }

.taskbar { display: flex; height: 40px; background: #0a0a0a; color: #fff; font: 12px/18px "Open Sans", sans-serif; align-items: center; }
.start { width: 50px; height: 40px; padding-right: 2px; }
.start svg { width: 16px; height: 16px; }
.app { width: 49px; height: 40px; }
.app svg { width: 24px; height: 24px; }
.app.open { background: linear-gradient(#76b9ed, #76b9ed) center bottom / 40px 2px no-repeat; }
.app.active { background: linear-gradient(#76b9ed, #76b9ed) bottom / 100% 2px no-repeat #3c3c3c; }
.tray { display: flex; gap: 8px; padding-right: 10px; }
.tray svg { width: 16px; height: 16px; }
.lang { width: 36px; }
.clock { display: flex; flex-direction: column; align-items: center; width: 60px; }
.notes { position: relative; width: 57px; height: 40px; }
.notes svg { width: 26px; height: 26px; }
.notes span { position: absolute; left: 29px; top: 15px; width: 6px; font-size: 10px; }
```
